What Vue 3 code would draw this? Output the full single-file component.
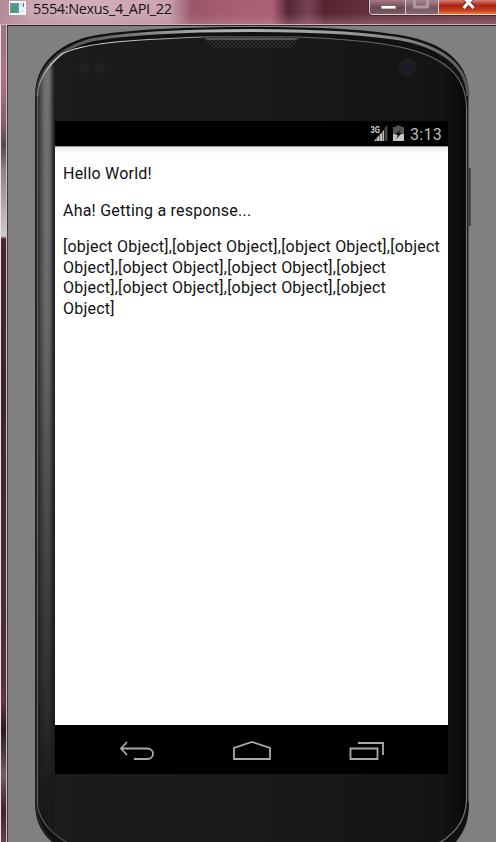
<script setup>
const lines = ['[object Object],[object Object],[object Object],[object', 'Object],[object Object],[object Object],[object', 'Object],[object Object],[object Object],[object', 'Object]']
</script>

<template>
  <div class="window">
    <header class="titlebar">
      <svg class="app-icon" width="17" height="14" viewBox="0 0 17 14">
        <rect width="17" height="14" fill="#f4f7f8" />
        <rect x="1" y="2" width="9" height="10" fill="#5b96b0" />
        <rect x="2" y="5" width="6" height="7" fill="#4c9a7c" />
        <path d="M11 3h3M11 5h3M11 10h4" stroke="#c4cdd0" />
        <path d="M14.500 2v4" stroke="#4a8d57" />
      </svg>
      <span class="title">5554:Nexus_4_API_22</span>
      <div class="controls">
        <span class="control minimize"><svg width="36" height="14"><rect x="11" y="5.500" width="15" height="3.500" fill="#fff" stroke="#554" stroke-width=".7" /></svg></span>
        <span class="control maximize"><svg width="32" height="14"><rect x="8.500" y="-4" width="13" height="11" fill="none" stroke="#ad989e" stroke-width="3" /></svg></span>
        <span class="control close"><svg width="60" height="14"><path d="M24 -4l11 12M35 -4L24 8" stroke="#713037" stroke-width="5" /><path d="M24.500 -3l10 11M34.500 -3L24.500 8" stroke="#fff" stroke-width="3" /></svg></span>
      </div>
    </header>
    <main class="client">
      <svg class="shell" width="496" height="842" viewBox="0 0 496 842">
        <defs>
          <linearGradient id="side" x1="37" x2="55" y1="0" y2="0" gradientUnits="userSpaceOnUse">
            <stop offset="0" stop-color="#1a1a1a" /><stop offset=".12" stop-color="#3e3e3e" /><stop offset=".35" stop-color="#666" /><stop offset=".55" stop-color="#757575" /><stop offset=".72" stop-color="#686868" /><stop offset=".88" stop-color="#333" /><stop offset="1" stop-color="#191919" />
          </linearGradient>
          <linearGradient id="fade" x1="0" x2="0" y1="60" y2="800" gradientUnits="userSpaceOnUse">
            <stop offset="0" stop-color="#191919" stop-opacity="0" /><stop offset=".35" stop-color="#191919" stop-opacity=".1" /><stop offset=".85" stop-color="#191919" stop-opacity=".75" /><stop offset="1" stop-color="#191919" />
          </linearGradient>
          <linearGradient id="face" x1="0" x2="1" y1="0" y2="0">
            <stop offset="0" stop-color="#1c1c1c" /><stop offset=".5" stop-color="#191919" /><stop offset=".94" stop-color="#141414" /><stop offset="1" stop-color="#070707" />
          </linearGradient>
          <linearGradient id="rim" x1="35" x2="469" y1="0" y2="0" gradientUnits="userSpaceOnUse">
            <stop offset="0" stop-color="#333" /><stop offset=".08" stop-color="#555" /><stop offset=".22" stop-color="#777" /><stop offset=".4" stop-color="#b2b2b2" /><stop offset=".65" stop-color="#a2a2a2" /><stop offset=".85" stop-color="#888" /><stop offset="1" stop-color="#555" />
          </linearGradient>
          <linearGradient id="edge" x1="35" x2="469" y1="0" y2="0" gradientUnits="userSpaceOnUse">
            <stop offset="0" stop-color="#777" /><stop offset=".04" stop-color="#ddd" /><stop offset=".1" stop-color="#ddd" /><stop offset=".3" stop-color="#aaa" /><stop offset=".6" stop-color="#666" /><stop offset="1" stop-color="#666" />
          </linearGradient>
          <pattern id="mesh" width="4" height="4" patternUnits="userSpaceOnUse"><rect width="4" height="4" fill="#303030" /><path d="M0 0l4 4M4 0L0 4" stroke="#171717" /></pattern>
          <clipPath id="face-clip"><path d="M37 850V97C37 80 47 66 62 53C83 42 125 40 205 37H300C365 40 411 45 437 60C458 71 467 87 467 107V800C467 818 456 833 439 843H68C51 833 37 820 37 802Z" /></clipPath>
        </defs>
        <path d="M468 168h2.500v58H468z" fill="#303030" />
        <path d="M35 96C35 66 55 46 87 37C125 29 190 27 252 27C320 27 370 29 410 37C450 46 469 66 469 96V802C469 820 465 832 454 844H54C40 832 35 820 35 802Z" fill="#111" />
        <path d="M36.500 96C38 69 57 50 89 40.500C126 33 190 30.500 252 30.500C320 30.500 370 33 408 40.500C447 50 467 69 468 96" fill="none" stroke="url(#rim)" stroke-width="3" />
        <path d="M36 96V802C36 819 43 833 55 844" fill="none" stroke="#333" />
        <path d="M468.500 96V802" fill="none" stroke="#555" />
        <path d="M37 810V97C37 80 47 66 62 54C83 43 125 40 205 37H300C365 40 411 45 437 60C458 71 467 87 467 107V800C467 818 456 833 439 843H68C51 833 37 820 37 802Z" fill="url(#face)" />
        <g clip-path="url(#face-clip)"><path d="M37 50H55V850H37Z" fill="url(#side)" /><path d="M37 50H55V850H37Z" fill="url(#fade)" /></g>
        <path d="M37.500 97C37.500 80 47 66 62 54C83 43 125 40 205 37H300C365 40 411 45 437 60C458 71 466 87 466.500 107" fill="none" stroke="url(#edge)" stroke-width="1.200" />
        <path d="M37.500 97V802C38 819 50 833 68 843" fill="none" stroke="#777" stroke-width=".8" />
        <path d="M466.500 107V800C466 818 456 833 439 843" fill="none" stroke="#777" stroke-width="1.200" />
        <path d="M201 37H302C296 38 296 47 289 48H215C207 48 208 38 201 37Z" fill="url(#mesh)" />
        <path d="M203 37.500H301L295 40H208Z" fill="#555" />
        <circle cx="84" cy="68" r="5.500" fill="#212121" /><circle cx="100" cy="68" r="5.500" fill="#222" />
        <circle cx="407.500" cy="67" r="9" fill="#1d1d20" /><circle cx="407.500" cy="67" r="4" fill="#191927" /><circle cx="407.500" cy="67" r="1.300" fill="#252548" />
      </svg>
      <section class="screen">
        <div class="status">
          <svg width="35" height="18" viewBox="370 125 35 18">
            <text x="370.500" y="133" class="network" textLength="9.500" lengthAdjust="spacingAndGlyphs">3G</text>
            <path d="M387.500 125V141H384.500V128Z" fill="#464646" />
            <path d="M374 141L384 130V141Z" fill="#c0c0c0" />
            <path d="M376.500 136v5M379.500 133v8M382.500 130v11" stroke="#333" stroke-width=".6" />
            <path d="M393 127h3v-1.500h5v1.500h3v7h-11z" fill="#555" />
            <path d="M393 134h11v7h-11z" fill="#c5c5c5" />
            <path d="M401 129l-6 6h3l-2 4 6-6h-3z" fill="#111" />
          </svg>
          <span class="time">3:13</span>
        </div>
        <div class="content">
          <p>Hello World!</p>
          <p>Aha! Getting a response...</p>
          <p><span v-for="(line, i) in lines" :key="i" class="line">{{ line }}</span></p>
        </div>
        <nav class="navigation">
          <svg width="35" height="20" viewBox="0 0 35 20"><path d="M8 1L2 7.500L8 14M2 7.500H28C36 7.500 36 18 28 18H15" /></svg>
          <svg width="38" height="20" viewBox="0 0 38 20"><path d="M1 18V7L19 1L37 7V18Z" /></svg>
          <svg width="36" height="20" viewBox="0 0 36 20"><path d="M1.500 7.500H28.500V18H1.500ZM9 2H34V14" /></svg>
        </nav>
      </section>
    </main>
  </div>
</template>

<style>
body { overflow: hidden; }
</style>
<style scoped>
.window {
  width: 496px; height: 842px; box-sizing: border-box; padding-left: 7px; overflow: hidden; position: relative;
  background: linear-gradient(90deg, #eee1e5 0 1px, transparent 1px 6px, #d1bfc4 6px 7px, transparent 7px), linear-gradient(180deg, #987380 0, #aa7483 80px, #805e6b 125px, #504852 145px, #8d8285 170px, #d0cbd0 236px, #48272f 239px, #38252b 400px, #50313b 680px, #613843 700px, #281b22 730px, #705d60 775px, #40222b 810px, #62434b 842px);
}
.titlebar {
  height: 25px; margin-left: -7px; padding-left: 9px; box-sizing: border-box; display: flex; align-items: flex-start; position: relative;
  background: linear-gradient(transparent 24px, #cbb3b9 24px), linear-gradient(transparent 13px, #b98c9766 24px), linear-gradient(90deg, #b38b98 0, #cba5b1 30px, #d2afbb 90px, #cba3af 168px, #9b566a 192px, #a85d73 235px, #ad6076 272px, #552735 288px, #794253 309px, #552431 325px, #65313f 370px, #6e3c49 496px);
}
.app-icon { margin-top: 1px; }
.title { margin: 0 0 0 7px; font: 14.5px/18px "Open Sans", sans-serif; color: #171217; white-space: nowrap; letter-spacing: -.35px; }
.controls { position: absolute; top: 0; left: 369px; display: flex; height: 15px; width: 140px; box-sizing: border-box; border: solid #e3cbd0; border-width: 0 1px 1px; border-radius: 0 0 4px 4px; box-shadow: 0 0 0 1px #422c34; overflow: hidden; }
.control { height: 14px; display: block; overflow: hidden; }
.control svg { display: block; }
.minimize { width: 35px; background: linear-gradient(#a77886, #6c4852 55%, #7d5962); border-right: 1px solid #ddc4cb; }
.maximize { width: 32px; background: linear-gradient(#aa8790, #77545e 55%, #856871); border-right: 1px solid #dfc5ca; }
.close { width: 70px; background: linear-gradient(#d78172, #ae2115 40%, #c84119 75%, #e47a43); }
.client { height: 817px; background: #808080; border-top: 1px solid #29252a; border-left: 1px solid #44383f; box-sizing: border-box; padding: 95px 0 0 47px; }
.shell { position: absolute; left: 0; top: 0; }
.screen { width: 393px; height: 653px; position: relative; display: flex; flex-direction: column; background: #fff; }
.status { height: 25px; flex-shrink: 0; background: #000; display: flex; align-items: center; justify-content: flex-end; padding-right: 6px; box-sizing: border-box; color: #bdbdbd; }
.status svg { margin-right: 5px; }
.network { font: bold 9px "Roboto", sans-serif; fill: #d0d0d0; }
.time { font: 16px/25px Roboto, sans-serif; letter-spacing: .3px; padding-top: 2px; }
.content { flex: 1; background: linear-gradient(#999 0 1px, #ececec 1px, #fff 8px); padding: 18px 8px 0; font: 16px/20.5px Roboto, sans-serif; letter-spacing: .22px; color: #111; }
.content p { margin: 0 0 16px; }
.line { display: block; white-space: nowrap; }
.navigation { height: 49px; flex-shrink: 0; background: #000; display: flex; align-items: center; justify-content: space-between; padding: 2px 63px 0 64px; box-sizing: border-box; }
.navigation svg { fill: none; stroke: #aaa; stroke-width: 1.8; }
</style>
